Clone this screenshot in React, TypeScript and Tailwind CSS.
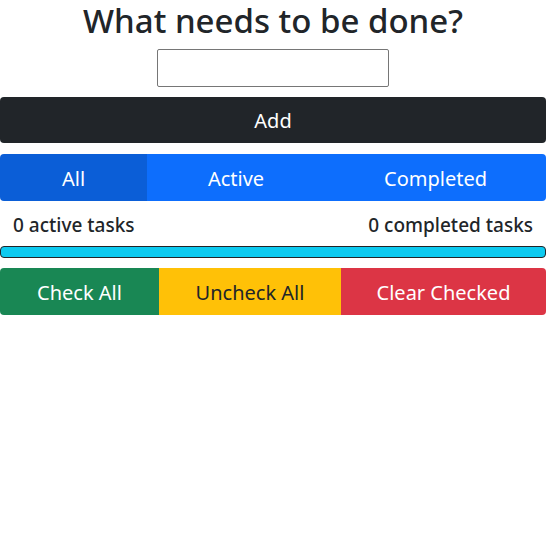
const filtros = [
  { rotulo: "All", largura: "w-[147px]", ativo: true },
  { rotulo: "Active", largura: "w-[178px]", ativo: false },
  { rotulo: "Completed", largura: "flex-1", ativo: false },
];

const acoes = [
  { rotulo: "Check All", classe: "w-[159px] bg-[#198754] text-white" },
  { rotulo: "Uncheck All", classe: "w-[182px] bg-[#ffc107] text-[#212529]" },
  { rotulo: "Clear Checked", classe: "flex-1 bg-[#dc3545] text-white" },
];

export default function App() {
  return (
    <div className="w-full bg-white text-[#212529] font-['Noto_Sans',sans-serif]">
      {/* Cabeçalho + entrada */}
      <h1 className="text-center text-[33px] font-medium leading-[42px] mb-[7px]">
        What needs to be done?
      </h1>
      <div className="flex justify-center">
        <input
          type="text"
          className="w-[232px] h-[38px] border border-[#767676] rounded-[2px] px-2"
        />
      </div>
      <button className="mt-[10px] w-full h-[46px] pt-[2px] bg-[#212529] text-white text-[20px] rounded-[4px]">
        Add
      </button>

      {/* Filtros */}
      <div className="mt-[11px] flex h-[47px] rounded-[4px] overflow-hidden">
        {filtros.map((f) => (
          <button
            key={f.rotulo}
            className={`${f.largura} pt-[2px] text-white text-[20px] ${
              f.ativo ? "bg-[#0b5ed7]" : "bg-[#0d6efd]"
            }`}
          >
            {f.rotulo}
          </button>
        ))}
      </div>

      {/* Contadores */}
      <div className="flex justify-between px-[13px] pt-[10px] pb-[7px] text-[19px] font-medium leading-[28px]">
        <span>0 active tasks</span>
        <span>0 completed tasks</span>
      </div>
      <div className="h-[12px] border border-[#212529] bg-[#0dcaf0] rounded-[4px]"></div>

      {/* Ações */}
      <div className="mt-[10px] flex h-[47px] rounded-[4px] overflow-hidden">
        {acoes.map((a) => (
          <button key={a.rotulo} className={`${a.classe} pt-[2px] text-[20px]`}>
            {a.rotulo}
          </button>
        ))}
      </div>
    </div>
  );
}
